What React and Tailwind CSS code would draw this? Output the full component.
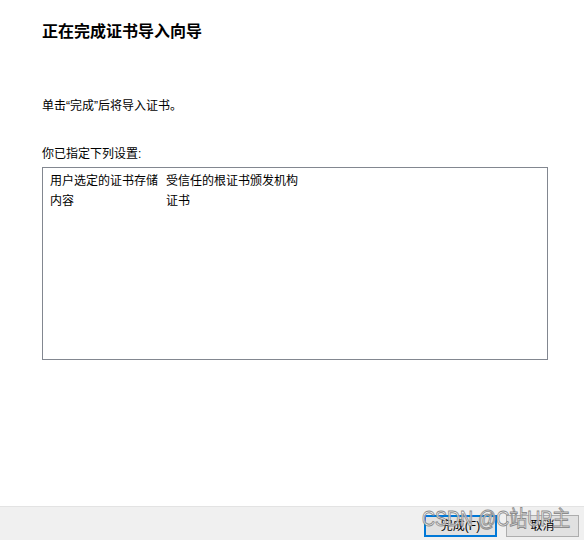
import React from "react";

const font = { fontFamily: '"Liberation Sans", "Noto Sans CJK SC", sans-serif' };

export default function App() {
  return (
    <div
      className="relative w-[584px] h-[540px] bg-white flex flex-col overflow-hidden text-black"
      style={font}
    >
      <div className="flex-1 flex flex-col pl-[42px]">
        <div className="mt-[21px] text-[16px] leading-[22px] font-bold">正在完成证书导入向导</div>
        <div className="mt-[53px] text-[12px] leading-[20px]">单击“完成”后将导入证书。</div>
        <div className="mt-[28px] text-[12px] leading-[20px]">你已指定下列设置:</div>
        <div className="mt-[3px] w-[506px] h-[193px] border border-[#828790] pt-[3px] pl-[7px] text-[12px] leading-[20px]">
          <div className="flex">
            <div className="w-[116px]">用户选定的证书存储</div>
            <div>受信任的根证书颁发机构</div>
          </div>
          <div className="flex">
            <div className="w-[116px]">内容</div>
            <div>证书</div>
          </div>
        </div>
      </div>
      <div className="h-[34px] bg-[#f0f0f0] border-t border-[#e3e3e3] flex justify-end items-start pt-[8px] pr-[5px] gap-[9px]">
        <button className="w-[73px] h-[22px] bg-[#e1e1e1] border-2 border-[#0078d7] text-[12px] leading-[18px] text-black">
          完成(F)
        </button>
        <button className="w-[73px] h-[22px] bg-[#e1e1e1] border border-[#adadad] text-[12px] leading-[20px] text-black">
          取消
        </button>
      </div>
      <div
        className="absolute left-[422px] top-[508px] text-[18px] leading-[18px] whitespace-nowrap text-white/75 [-webkit-text-stroke:0.8px_#8c8c8c] origin-top scale-y-[1.2] pointer-events-none"
      >
        CSDN @C站UP主
      </div>
    </div>
  );
}
